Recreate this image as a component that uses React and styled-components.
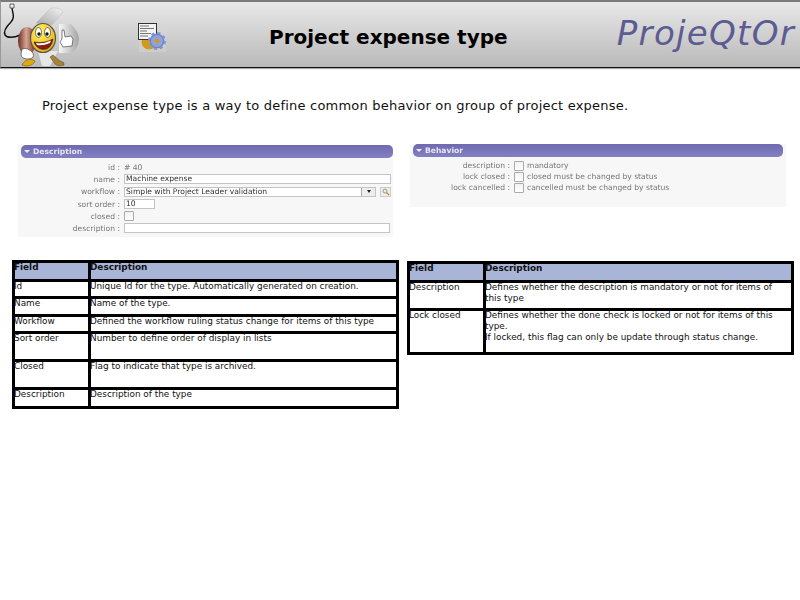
import React from "react";
import styled, { createGlobalStyle } from "styled-components";

const GlobalStyle = createGlobalStyle`
  html, body {
    margin: 0;
    padding: 0;
    background: #fff;
    font-family: "DejaVu Sans", sans-serif;
  }
`;

const Page = styled.div`
  width: 800px;
  height: 600px;
  overflow: hidden;
`;

const Header = styled.header`
  box-sizing: border-box;
  height: 68px;
  display: flex;
  align-items: flex-start;
  background: linear-gradient(to bottom, #e8e8e8, #b9b9b9);
  border-top: 2px solid #7b7b7b;
  border-bottom: 1px solid #111;
  border-left: 1px solid #999;
  box-shadow: 0 1px 1px #aaa;
`;

const Logo = styled.svg`
  flex: none;
  width: 90px;
  height: 65px;
  margin-left: -1px;
`;

const SetupIcon = styled.svg`
  flex: none;
  width: 30px;
  height: 30px;
  margin: 21px 0 0 47px;
`;

const Title = styled.h1`
  margin: 21px 0 0 102px;
  font-size: 20px;
  line-height: 28px;
  font-weight: bold;
  color: #000;
  white-space: nowrap;
`;

const Brand = styled.div`
  margin: 9px 5px 0 auto;
  font-family: "DejaVu Sans ExtraLight", "DejaVu Sans", sans-serif;
  font-size: 34px;
  line-height: 44px;
  font-style: italic;
  font-weight: 200;
  color: #5c5c92;
  letter-spacing: 1.3px;
`;

const Intro = styled.p`
  margin: 29px 0 0 42px;
  font-size: 13px;
  line-height: 17px;
  letter-spacing: 0.21px;
  color: #111;
  white-space: nowrap;
`;

const Columns = styled.div`
  display: grid;
  grid-template-columns: 390px 1fr;
  align-items: start;
  margin-top: 30px;
`;

const Panel = styled.section`
  box-sizing: border-box;
  width: ${p => p.$width}px;
  height: ${p => p.$height}px;
  margin: ${p => p.$margin};
  padding: ${p => p.$padding};
  background: #f7f7f7;
  font-size: 7.6px;
  color: #777;
  filter: blur(0.25px);
`;

const PanelBar = styled.div`
  height: 13px;
  display: flex;
  align-items: center;
  gap: 3px;
  padding-left: 3px;
  border-radius: 5px;
  background: linear-gradient(to bottom, #6f6ab0, #8380c2);
  color: #e6e6f4;
  font-weight: bold;
  font-size: 7.6px;
`;

const Caret = styled.span`
  width: 0;
  height: 0;
  border-left: 3px solid transparent;
  border-right: 3px solid transparent;
  border-top: 3px solid #eee;
`;

const FormRows = styled.div`
  display: flex;
  flex-direction: column;
  padding-top: ${p => p.$top}px;
`;

const FormRow = styled.div`
  height: ${p => p.$h || 12}px;
  display: flex;
  align-items: center;
  gap: 4px;
`;

const Label = styled.span`
  flex: none;
  width: ${p => p.$width}px;
  text-align: right;
  white-space: nowrap;
`;

const Field = styled.div`
  box-sizing: border-box;
  flex: none;
  width: ${p => p.$width}px;
  height: 10px;
  padding-left: 1px;
  border: 1px solid #c4c4c4;
  background: #fff;
  color: #333;
  line-height: 8px;
  display: flex;
  justify-content: space-between;
  white-space: nowrap;
`;

const DropArrow = styled.span`
  flex: none;
  width: 13px;
  height: 8px;
  display: flex;
  align-items: center;
  justify-content: center;
  border-left: 1px solid #aaa;
  background: #eee;

  &::after {
    content: "";
    border-left: 2.5px solid transparent;
    border-right: 2.5px solid transparent;
    border-top: 3px solid #222;
  }
`;

const SearchButton = styled.span`
  flex: none;
  width: 11px;
  height: 10px;
  border: 1px solid #ccc;
  box-sizing: border-box;
  background: #eee;
  display: flex;
  align-items: center;
  justify-content: center;
`;

const Check = styled.span`
  flex: none;
  box-sizing: border-box;
  width: 10px;
  height: 10px;
  border: 1px solid #aaa;
  border-radius: 1px;
  background: linear-gradient(to bottom, #f2f2f2, #fff);
`;

const Value = styled.span`
  white-space: nowrap;
`;

const CheckText = styled(Value)`
  margin-left: -1px;
`;

const DocTable = styled.table`
  table-layout: fixed;
  border-collapse: collapse;
  width: ${p => p.$width}px;
  margin: ${p => p.$margin};
  font-size: 8.9px;
  line-height: 11px;
  color: #111;
`;

const HeadCell = styled.th`
  height: ${p => p.$h}px;
  padding: 0;
  border: 3px solid #000;
  background: #a9b5d6;
  text-align: left;
  vertical-align: top;
  font-weight: bold;
`;

const Cell = styled.td`
  height: ${p => p.$h}px;
  padding: 0 14px 0 0;
  border: 3px solid #000;
  background: #fff;
  vertical-align: top;
`;

const CellText = styled.div`
  margin: -1px 0 1px -1px;
  position: relative;
`;

const descriptionRows = [
  ["Id", "Unique Id for the type. Automatically generated on creation.", 14],
  ["Name", "Name of the type.", 15],
  ["Workflow", "Defined the workflow ruling status change for items of this type", 14],
  ["Sort order", "Number to define order of display in lists", 25],
  ["Closed", "Flag to indicate that type is archived.", 25],
  ["Description", "Description of the type", 16],
];

const behaviorRows = [
  ["Description", ["Defines whether the description is mandatory or not for items of this type"], 25],
  [
    "Lock closed",
    [
      "Defines whether the done check is locked or not for items of this type.",
      "If locked, this flag can only be update through status change.",
    ],
    41,
  ],
];

const MascotLogo = () => (
  <Logo viewBox="0 0 90 65">
    <defs>
      <linearGradient id="door" x1="0" x2="1" y1="0" y2="0">
        <stop offset="0" stopColor="#f6f6f6" />
        <stop offset="1" stopColor="#a4a4a4" />
      </linearGradient>
      <linearGradient id="topDoor" x1="0" x2="1" y1="1" y2="0">
        <stop offset="0" stopColor="#a8a8a8" />
        <stop offset="1" stopColor="#f2f2f2" />
      </linearGradient>
      <linearGradient id="lamp" x1="0" x2="1" y1="0" y2="0">
        <stop offset="0" stopColor="#6d2a22" />
        <stop offset="0.45" stopColor="#d3a595" />
        <stop offset="1" stopColor="#8a1f1f" />
      </linearGradient>
      <radialGradient id="face" cx="0.4" cy="0.3" r="0.8">
        <stop offset="0" stopColor="#fff36a" />
        <stop offset="1" stopColor="#e8a800" />
      </radialGradient>
    </defs>
    <path d="M12 6 C13 13 15 15 11 20 C7 24 3 29 5 33 C7 36 14 36 20 33" fill="none" stroke="#111" strokeWidth="1.4" />
    <path d="M10 2 h4 v4 h-4 z" fill="#eee" stroke="#333" strokeWidth="0.7" />
    <path d="M36 21 L51 6 Q60 5 63 10 L52 23 Z" fill="url(#topDoor)" stroke="#bbb" strokeWidth="0.5" />
    <path d="M59 22 H71 Q79 30 79 37 Q78 47 71 51 H59 Z" fill="url(#door)" />
    <path d="M38 49 H58 L50 64 H42 Z" fill="#e6e6e6" />
    <ellipse cx="27" cy="39" rx="9" ry="14" fill="url(#lamp)" />
    <ellipse cx="43" cy="36" rx="12.5" ry="14.5" fill="url(#face)" stroke="#555" strokeWidth="1.2" />
    <ellipse cx="38.5" cy="30.5" rx="3" ry="5" fill="#fff" stroke="#222" strokeWidth="0.6" />
    <ellipse cx="47.5" cy="30.5" rx="3" ry="5" fill="#fff" stroke="#222" strokeWidth="0.6" />
    <circle cx="39" cy="32" r="1.7" fill="#111" />
    <circle cx="47" cy="32" r="1.7" fill="#111" />
    <path d="M34 40 Q44 42 53 37 Q51 48 43 47.5 Q36 46.5 34 40 Z" fill="#8c1c12" stroke="#222" strokeWidth="0.6" />
    <path d="M36 41 Q44 42 51 38.5 L50 41 Q43 44 37 43 Z" fill="#fff" />
    <path d="M22 47 Q28 45 33 51 Q35 57 28 57 Q21 57 21 52 Z" fill="#fff" stroke="#333" strokeWidth="0.6" />
    <path d="M60 40 L62 37 L62 28 L64 28 L65 35 L71 34 L73 37 L72 44 L63 45 Z" fill="#fff" stroke="#333" strokeWidth="0.6" />
    <path d="M22 63 Q24 58 31 57 L35 59 Q33 64 26 64 Z" fill="#e2a90f" stroke="#6b4a00" strokeWidth="0.5" />
    <path d="M50 55 L53 53 L60 59 Q65 60 64 63 Q58 65 55 62 Z" fill="#a8843a" stroke="#5a4512" strokeWidth="0.5" />
  </Logo>
);

const GearDocIcon = () => (
  <SetupIcon viewBox="0 0 30 30">
    <rect x="2" y="2" width="27" height="27" fill="#d6d6d6" opacity="0.5" />
    <circle cx="12" cy="19" r="7.5" fill="#d39a18" />
    <rect x="1.5" y="0.5" width="18" height="16" fill="#f4f4f4" stroke="#333" />
    <path d="M3 3h9M3 5.5h14M3 8h7M3 10.5h11M3 13h8" stroke="#777" strokeWidth="1" />
    <circle cx="20" cy="18" r="7.5" fill="#7f95d4" stroke="#7f95d4" strokeWidth="3" strokeDasharray="3 2.9" />
    <circle cx="20" cy="18" r="6.5" fill="#8ea2dc" stroke="#5c70ac" strokeWidth="0.6" />
    <circle cx="20" cy="18" r="2.3" fill="#d89a16" />
  </SetupIcon>
);

const TinySearch = () => (
  <svg width="8" height="8" viewBox="0 0 8 8">
    <circle cx="3" cy="3" r="2" fill="#eed" stroke="#886" strokeWidth="0.8" />
    <path d="M4.5 4.5 L7 7" stroke="#b58a2a" strokeWidth="1.2" />
  </svg>
);

export default function App() {
  return (
    <Page>
      <GlobalStyle />
      <Header>
        <MascotLogo />
        <GearDocIcon />
        <Title>Project expense type</Title>
        <Brand>ProjeQtOr</Brand>
      </Header>
      <Intro>Project expense type is a way to define common behavior on group of project expense.</Intro>
      <Columns>
        <Panel $width={375} $height={92} $margin="1px 0 0 18px" $padding="0 0 0 3px">
          <PanelBar><Caret />Description</PanelBar>
          <FormRows $top={3}>
            <FormRow><Label $width={99}>id :</Label><Value>&#35; 40</Value></FormRow>
            <FormRow><Label $width={99}>name :</Label><Field $width={267}>Machine expense</Field></FormRow>
            <FormRow $h={13}>
              <Label $width={99}>workflow :</Label>
              <Field $width={252}>Simple with Project Leader validation<DropArrow /></Field>
              <SearchButton><TinySearch /></SearchButton>
            </FormRow>
            <FormRow><Label $width={99}>sort order :</Label><Field $width={31}>10</Field></FormRow>
            <FormRow><Label $width={99}>closed :</Label><Check /></FormRow>
            <FormRow><Label $width={99}>description :</Label><Field $width={266} /></FormRow>
          </FormRows>
        </Panel>
        <Panel $width={376} $height={63} $margin="0 0 0 20px" $padding="0 3px">
          <PanelBar><Caret />Behavior</PanelBar>
          <FormRows $top={3}>
            <FormRow $h={11}><Label $width={97}>description :</Label><Check /><CheckText>mandatory</CheckText></FormRow>
            <FormRow $h={11}><Label $width={97}>lock closed :</Label><Check /><CheckText>closed must be changed by status</CheckText></FormRow>
            <FormRow $h={11}><Label $width={97}>lock cancelled :</Label><Check /><CheckText>cancelled must be changed by status</CheckText></FormRow>
          </FormRows>
        </Panel>
      </Columns>
      <Columns>
        <DocTable $width={387} $margin="-7px 0 0 12px">
          <colgroup><col style={{ width: 76 }} /><col /></colgroup>
          <thead>
            <tr><HeadCell $h={16}><CellText>Field</CellText></HeadCell><HeadCell $h={16}><CellText>Description</CellText></HeadCell></tr>
          </thead>
          <tbody>
            {descriptionRows.map(([field, text, h]) => (
              <tr key={field}>
                <Cell $h={h}><CellText>{field}</CellText></Cell>
                <Cell $h={h}><CellText>{text}</CellText></Cell>
              </tr>
            ))}
          </tbody>
        </DocTable>
        <DocTable $width={387} $margin="-6px 0 0 17px">
          <colgroup><col style={{ width: 76 }} /><col /></colgroup>
          <thead>
            <tr><HeadCell $h={16}><CellText>Field</CellText></HeadCell><HeadCell $h={16}><CellText>Description</CellText></HeadCell></tr>
          </thead>
          <tbody>
            {behaviorRows.map(([field, lines, h]) => (
              <tr key={field}>
                <Cell $h={h}><CellText>{field}</CellText></Cell>
                <Cell $h={h}>{lines.map(line => <CellText key={line}>{line}</CellText>)}</Cell>
              </tr>
            ))}
          </tbody>
        </DocTable>
      </Columns>
    </Page>
  );
}
